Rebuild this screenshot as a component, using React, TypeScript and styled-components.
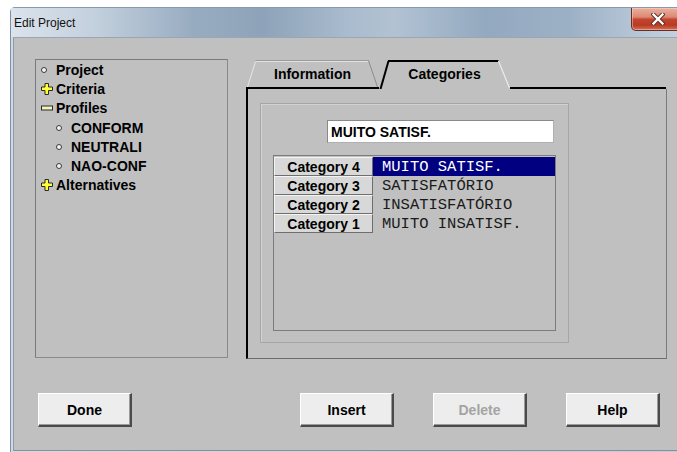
import styled, { createGlobalStyle } from "styled-components";

const GlobalStyle = createGlobalStyle`
  html, body {
    margin: 0;
    padding: 0;
    background: #ffffff;
    overflow: hidden;
  }
  * {
    box-sizing: border-box;
  }
`;

type TreeNode = {
  label: string;
  level: number;
  icon: "bullet" | "plus" | "minus";
};

const treeNodes: TreeNode[] = [
  { label: "Project", level: 0, icon: "bullet" },
  { label: "Criteria", level: 0, icon: "plus" },
  { label: "Profiles", level: 0, icon: "minus" },
  { label: "CONFORM", level: 1, icon: "bullet" },
  { label: "NEUTRALI", level: 1, icon: "bullet" },
  { label: "NAO-CONF", level: 1, icon: "bullet" },
  { label: "Alternatives", level: 0, icon: "plus" },
];

const categories = [
  { name: "Category 4", value: "MUITO SATISF." },
  { name: "Category 3", value: "SATISFATÓRIO" },
  { name: "Category 2", value: "INSATISFATÓRIO" },
  { name: "Category 1", value: "MUITO INSATISF." },
];

const PlusIcon = () => (
  <svg width="12" height="12" viewBox="0 0 12 12">
    <polygon
      points="4,0.5 7.5,0.5 7.5,4 11.5,4 11.5,7.5 7.5,7.5 7.5,11.5 4,11.5 4,7.5 0.5,7.5 0.5,4 4,4"
      fill="#ffff3a"
      stroke="#2a2a2a"
      strokeWidth="1"
    />
  </svg>
);

const MinusIcon = () => (
  <svg width="12" height="12" viewBox="0 0 12 12">
    <rect x="0.5" y="4" width="11" height="4" fill="#f3f3b8" stroke="#2a2a2a" strokeWidth="1" />
  </svg>
);

const CloseGlyph = () => (
  <svg width="14" height="12" viewBox="0 0 14 12">
    <path d="M2.5 1.5 L11.5 10.5 M11.5 1.5 L2.5 10.5" stroke="#5a2a22" strokeWidth="4.2" strokeLinecap="square" />
    <path d="M2.5 1.5 L11.5 10.5 M11.5 1.5 L2.5 10.5" stroke="#ffffff" strokeWidth="2.4" strokeLinecap="square" />
  </svg>
);

// back tab: open trapezoid sitting on the panel's top line
const BackTabShape = () => (
  <TabShape viewBox="0 0 133 29" preserveAspectRatio="none">
    <rect x="0" y="27" width="133" height="2" fill="#000" />
    <path d="M1.5 27 L9.5 1.5" stroke="#e6e6e6" strokeWidth="1" fill="none" />
    <path d="M9.5 0.5 L122.5 0.5" stroke="#9a9a9a" strokeWidth="1" />
    <path d="M10 1.5 L122 1.5" stroke="#e2e2e2" strokeWidth="1" />
    <path d="M122.5 0.5 L131.5 27" stroke="#8c8c8c" strokeWidth="1" fill="none" />
  </TabShape>
);

// front tab: black outline, opens into the panel below
const FrontTabShape = () => (
  <TabShape viewBox="0 0 131 29" preserveAspectRatio="none">
    <path d="M1.5 29 L9.5 1" stroke="#000" strokeWidth="2" fill="none" />
    <path d="M9 1 L119.5 1" stroke="#000" strokeWidth="2" />
    <path d="M119.5 1 L130.5 28" stroke="#ececec" strokeWidth="1.2" fill="none" />
  </TabShape>
);

export default function App() {
  return (
    <>
      <GlobalStyle />
      <Page>
        <Window>
          <TitleBar>
            <TitleText>Edit Project</TitleText>
            <CloseButton>
              <CloseGlyph />
            </CloseButton>
          </TitleBar>

          <Client>
            <TopRow>
              <TreePanel>
                {treeNodes.map((node) => (
                  <TreeRow key={node.label} $level={node.level}>
                    <IconSlot>
                      {node.icon === "bullet" && <Bullet />}
                      {node.icon === "plus" && <PlusIcon />}
                      {node.icon === "minus" && <MinusIcon />}
                    </IconSlot>
                    <TreeLabel>{node.label}</TreeLabel>
                  </TreeRow>
                ))}
              </TreePanel>

              <TabArea>
                <TabStrip>
                  <Tab $width={133}>
                    <BackTabShape />
                    <TabLabel>Information</TabLabel>
                  </Tab>
                  <Tab $width={131}>
                    <FrontTabShape />
                    <TabLabel>Categories</TabLabel>
                  </Tab>
                  <TabFiller />
                </TabStrip>

                <TabPanel>
                  <GroupBox>
                    <NameInput>MUITO SATISF.</NameInput>
                    <CategoryList>
                      {categories.map((cat, i) => (
                        <CategoryRow key={cat.name}>
                          <CategoryHeader>{cat.name}</CategoryHeader>
                          <CategoryValue $selected={i === 0}>{cat.value}</CategoryValue>
                        </CategoryRow>
                      ))}
                    </CategoryList>
                  </GroupBox>
                </TabPanel>
              </TabArea>
            </TopRow>

            <ButtonRow>
              <PushButton>Done</PushButton>
              <ActionGroup>
                <PushButton>Insert</PushButton>
                <PushButton disabled>Delete</PushButton>
                <PushButton>Help</PushButton>
              </ActionGroup>
            </ButtonRow>
          </Client>
        </Window>
      </Page>
    </>
  );
}

const Page = styled.div`
  width: 677px;
  height: 452px;
  padding: 7px 0 0 10px;
  overflow: hidden;
  background: #ffffff;
`;

const Window = styled.div`
  width: 700px;
  height: 446px;
  display: flex;
  flex-direction: column;
  border-left: 1px solid #7d8fa3;
  border-top: 1px solid #8799ad;
  border-top-left-radius: 5px;
  background: linear-gradient(90deg, #cfdae5 0%, #bccbda 100%);
  padding: 0 0 2px 2px;
`;

const TitleBar = styled.div`
  height: 29px;
  margin-left: -2px;
  padding-left: 3px;
  display: flex;
  align-items: flex-start;
  justify-content: space-between;
  background: linear-gradient(
    90deg,
    #dbe3ec 0%,
    #c3d0dd 12%,
    #98acc1 26%,
    #8ea3b9 36%,
    #a9bbcd 48%,
    #b2c2d3 55%,
    #93a9bf 68%,
    #9db1c6 80%,
    #bccbda 92%,
    #cdd8e3 100%
  );
`;

const TitleText = styled.span`
  margin-top: 8px;
  font-family: "Liberation Sans", Arial, sans-serif;
  font-size: 12px;
  color: #111111;
`;

const CloseButton = styled.div`
  width: 54px;
  height: 23px;
  margin-right: 25px;
  display: flex;
  align-items: center;
  justify-content: center;
  border: 1px solid #6b2c22;
  border-top: none;
  border-radius: 0 0 5px 5px;
  background: linear-gradient(
    180deg,
    #e9b0a0 0%,
    #dc8a75 40%,
    #c4452f 52%,
    #b93a22 78%,
    #d0735a 100%
  );
  box-shadow: inset 0 0 0 1px rgba(255, 220, 210, 0.45);
`;

const Client = styled.div`
  flex: 1;
  display: flex;
  flex-direction: column;
  background: #c0c0c0;
  border-left: 1px solid #8e9aa8;
  border-top: 1px solid #9aa6b3;
  border-bottom: 1px solid #8a8f96;
`;

const TopRow = styled.div`
  display: flex;
  align-items: flex-start;
  padding: 21px 0 0 21px;
`;

const TreePanel = styled.div`
  width: 193px;
  height: 299px;
  border-top: 1px solid #7a7a7a;
  border-left: 1px solid #7a7a7a;
  border-right: 1px solid #8a8a8a;
  border-bottom: 1px solid #8a8a8a;
  display: flex;
  flex-direction: column;
`;

const TreeRow = styled.div<{ $level: number }>`
  height: 19.3px;
  display: flex;
  align-items: center;
  padding-left: ${(p) => 5 + p.$level * 15}px;
`;

const IconSlot = styled.span`
  width: 12px;
  height: 12px;
  display: flex;
  align-items: center;
  justify-content: flex-start;
  margin-right: 3px;

  svg {
    display: block;
  }
`;

const Bullet = styled.span`
  width: 6px;
  height: 6px;
  border-radius: 50%;
  border: 1px solid #3a3a3a;
  background: #f4f4f4;
`;

const TreeLabel = styled.span`
  font-family: "Liberation Sans", Arial, sans-serif;
  font-weight: bold;
  font-size: 14px;
  color: #000000;
  white-space: nowrap;
`;

const TabArea = styled.div`
  width: 421px;
  margin-left: 18px;
  margin-top: 1px;
  display: flex;
  flex-direction: column;
`;

const TabStrip = styled.div`
  height: 29px;
  display: flex;
`;

const Tab = styled.div<{ $width: number }>`
  position: relative;
  width: ${(p) => p.$width}px;
  height: 29px;
  display: flex;
  align-items: center;
  justify-content: center;
  padding-bottom: 2px;
`;

const TabShape = styled.svg`
  position: absolute;
  inset: 0;
  width: 100%;
  height: 100%;
`;

const TabLabel = styled.span`
  position: relative;
  font-family: "Liberation Sans", Arial, sans-serif;
  font-weight: bold;
  font-size: 14px;
  color: #000000;
`;

const TabFiller = styled.div`
  flex: 1;
  border-bottom: 2px solid #000000;
  margin-right: 1px;
`;

const TabPanel = styled.div`
  height: 270px;
  border-left: 2px solid #000000;
  border-right: 1px solid #7a7a7a;
  border-bottom: 1px solid #6c6c6c;
  padding: 14px 0 0 12px;
`;

const GroupBox = styled.div`
  width: 309px;
  height: 240px;
  border: 1px solid #a6a6a6;
  box-shadow: inset 1px 1px 0 #d2d2d2;
  padding: 16px 0 0 12px;
  display: flex;
  flex-direction: column;
  align-items: flex-start;
`;

const NameInput = styled.div`
  width: 227px;
  height: 23px;
  margin-left: 54px;
  margin-bottom: 12px;
  padding-left: 3px;
  display: flex;
  align-items: center;
  background: #ffffff;
  border-top: 1px solid #8a8a8a;
  border-left: 1px solid #8a8a8a;
  border-right: 1px solid #b0b0b0;
  border-bottom: 1px solid #b0b0b0;
  font-family: "Liberation Sans", Arial, sans-serif;
  font-weight: bold;
  font-size: 14px;
  color: #000000;
`;

const CategoryList = styled.div`
  width: 283px;
  height: 176px;
  border: 1px solid #7c7c7c;
  padding: 1px 0 0 0;
  display: flex;
  flex-direction: column;
`;

const CategoryRow = styled.div`
  height: 19px;
  display: flex;
`;

const CategoryHeader = styled.div`
  width: 99px;
  height: 19px;
  display: flex;
  align-items: center;
  justify-content: center;
  background: #d8d8d8;
  border-top: 1px solid #f4f4f4;
  border-left: 1px solid #f4f4f4;
  border-right: 1px solid #6e6e6e;
  border-bottom: 1px solid #6e6e6e;
  font-family: "Liberation Sans", Arial, sans-serif;
  font-weight: bold;
  font-size: 14px;
  color: #000000;
`;

const CategoryValue = styled.div<{ $selected: boolean }>`
  flex: 1;
  height: 19px;
  display: flex;
  align-items: center;
  padding-left: 9px;
  background: ${(p) => (p.$selected ? "#000080" : "transparent")};
  color: ${(p) => (p.$selected ? "#ffffff" : "#1a1a1a")};
  font-family: "Liberation Mono", "Courier New", monospace;
  font-size: 15.5px;
  white-space: nowrap;
`;

const ButtonRow = styled.div`
  display: flex;
  padding: 34px 0 0 24px;
`;

const ActionGroup = styled.div`
  display: flex;
  gap: 39px;
  margin-left: 168px;
`;

const PushButton = styled.button`
  width: 94px;
  height: 34px;
  padding: 0;
  background: #ededed;
  border-top: 1px solid #ffffff;
  border-left: 1px solid #ffffff;
  border-right: 2px solid #4a4a4a;
  border-bottom: 2px solid #4a4a4a;
  box-shadow: inset -1px -1px 0 #9a9a9a;
  font-family: "Liberation Sans", Arial, sans-serif;
  font-weight: bold;
  font-size: 14px;
  color: #000000;

  &:disabled {
    color: #a4a4a4;
  }
`;
